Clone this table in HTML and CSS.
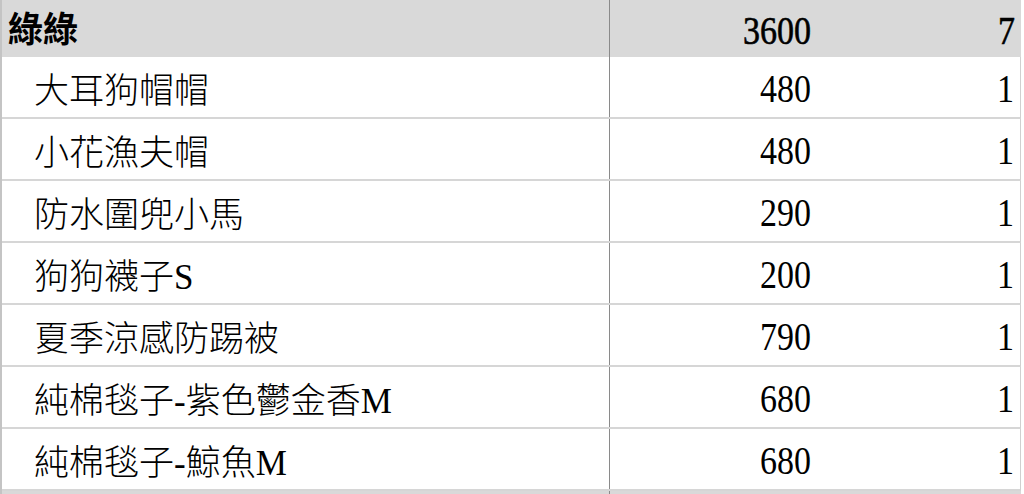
FILE: index.html
```html
<!DOCTYPE html>
<html lang="zh-Hant">
<head>
<meta charset="utf-8">
<title>綠綠</title>
<link rel="stylesheet" href="styles.css">
</head>
<body>
<div class="sheet">
  <div class="row group">
    <div class="cell name">綠綠</div>
    <div class="cell qty"><span class="num">3600</span></div>
    <div class="cell cnt"><span class="num">7</span></div>
  </div>
  <div class="row item">
    <div class="cell name">大耳狗帽帽</div>
    <div class="cell qty"><span class="num">480</span></div>
    <div class="cell cnt"><span class="num">1</span></div>
  </div>
  <div class="row item">
    <div class="cell name">小花漁夫帽</div>
    <div class="cell qty"><span class="num">480</span></div>
    <div class="cell cnt"><span class="num">1</span></div>
  </div>
  <div class="row item">
    <div class="cell name">防水圍兜小馬</div>
    <div class="cell qty"><span class="num">290</span></div>
    <div class="cell cnt"><span class="num">1</span></div>
  </div>
  <div class="row item">
    <div class="cell name">狗狗襪子S</div>
    <div class="cell qty"><span class="num">200</span></div>
    <div class="cell cnt"><span class="num">1</span></div>
  </div>
  <div class="row item">
    <div class="cell name">夏季涼感防踢被</div>
    <div class="cell qty"><span class="num">790</span></div>
    <div class="cell cnt"><span class="num">1</span></div>
  </div>
  <div class="row item">
    <div class="cell name">純棉毯子-紫色鬱金香M</div>
    <div class="cell qty"><span class="num">680</span></div>
    <div class="cell cnt"><span class="num">1</span></div>
  </div>
  <div class="row item">
    <div class="cell name">純棉毯子-鯨魚M</div>
    <div class="cell qty"><span class="num">680</span></div>
    <div class="cell cnt"><span class="num">1</span></div>
  </div>
  <div class="row group tail">
    <div class="cell name"></div>
    <div class="cell qty"></div>
    <div class="cell cnt"></div>
  </div>
</div>
</body>
</html>
```

FILE: styles.css
```css
html, body {
  margin: 0;
  padding: 0;
  background: #ffffff;
}

.sheet {
  box-sizing: border-box;
  width: 1021px;
  height: 494px;
  overflow: hidden;
  border-left: 2px solid #c4c4c4;
  font-family: "Liberation Serif", "Noto Sans CJK TC", serif;
  color: #000;
}

.row {
  display: grid;
  grid-template-columns: 608px 219px 1fr;
  box-sizing: border-box;
}

.group {
  height: 57px;
  background: #d9d9d9;
  font-weight: bold;
}

.tail {
  height: 10px;
}

.item {
  height: 62px;
  border-bottom: 2px solid #d6d6d6;
  border-right: 1px solid #d0d0d0;
}

.cell {
  display: flex;
  align-items: center;
  font-size: 35px;
  line-height: 1;
  padding-top: 4px;
  box-sizing: border-box;
}

.name {
  border-right: 1px solid #8a8a8a;
  font-family: "Liberation Serif", "Noto Sans CJK TC", serif;
  font-weight: 300;
  padding-left: 32px;
}

.item .name {
  padding-top: 8px;
}

.group .name {
  padding-left: 6px;
  font-weight: 700;
}

.qty {
  justify-content: flex-end;
  padding-right: 18px;
}

.cnt {
  justify-content: flex-end;
  padding-right: 6px;
}

.num {
  display: inline-block;
  font-size: 40px;
  transform: scaleX(0.85);
  transform-origin: right center;
  font-weight: normal;
}

.group .num {
  font-weight: normal;
  -webkit-text-stroke: 0.6px #000;
}
```
